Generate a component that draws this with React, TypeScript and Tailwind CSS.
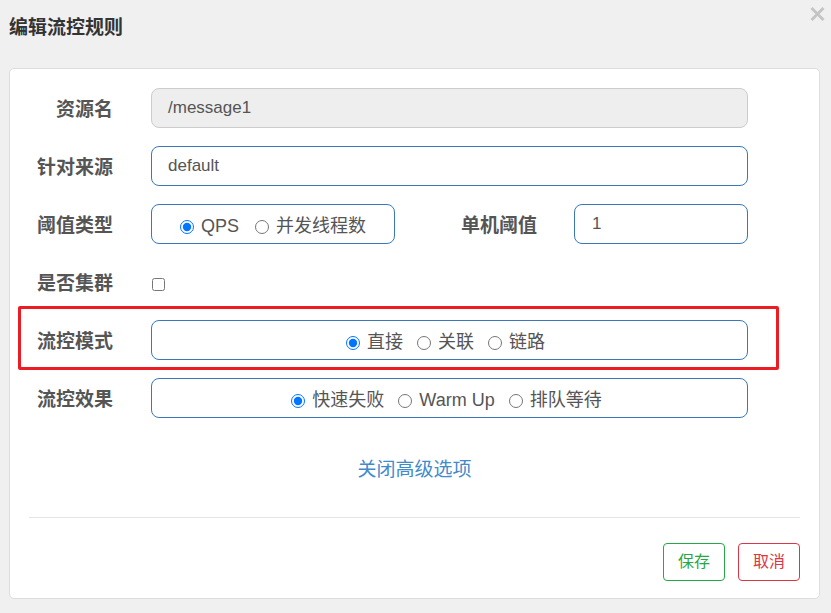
const font = "font-['Liberation_Sans','Noto_Sans_CJK_SC',sans-serif]";

function Radio({ label, checked }: { label: string; checked?: boolean }) {
  return (
    <label className="flex items-center">
      <input
        type="radio"
        defaultChecked={checked}
        className="m-0 h-[14px] w-[14px] accent-[#0075ff]"
      />
      <span className="ml-[7px]">{label}</span>
    </label>
  );
}

function Row({ label, children, last }: { label: string; children: React.ReactNode; last?: boolean }) {
  return (
    <div className={`flex h-[40px] items-center ${last ? "" : "mb-[18px]"}`}>
      <div className="w-[103px] pt-[5px] text-right text-[19px] font-bold text-[#555]">{label}</div>
      <div className="ml-[38px] flex h-full items-center">{children}</div>
    </div>
  );
}

export default function App() {
  return (
    <div className={`h-[613px] w-[831px] overflow-hidden bg-[#f0f0f0] ${font}`}>
      <div className="relative">
        <h1 className="pl-[9px] pt-[16px] text-[19px] font-bold leading-[24px] text-[#333]">编辑流控规则</h1>
        <svg className="absolute left-[810px] top-[7px]" width="15" height="14" viewBox="0 0 15 14">
          <path d="M1.5 1L13.5 13M13.5 1L1.5 13" stroke="#c4c4c4" strokeWidth="2.8" />
        </svg>
      </div>

      <div className="ml-[9px] mt-[28px] w-[811px] rounded-[5px] border border-[#ddd] bg-white pb-[17px] pt-[19px]">
        <Row label="资源名">
          <div className="flex h-[40px] w-[597px] items-center rounded-[8px] border border-[#ccc] bg-[#eee] pl-[16px] text-[17px] text-[#555]">
            /message1
          </div>
        </Row>
        <Row label="针对来源">
          <div className="flex h-[40px] w-[597px] items-center rounded-[8px] border border-[#3a78b8] pl-[16px] text-[17px] text-[#555]">
            default
          </div>
        </Row>
        <Row label="阈值类型">
          <div className="flex h-[40px] w-[244px] items-center justify-center gap-[16px] rounded-[8px] border border-[#3a78b8] pt-[5px] text-[18px] text-[#555]">
            <Radio label="QPS" checked />
            <Radio label="并发线程数" />
          </div>
          <div className="w-[142px] pt-[5px] text-right text-[19px] font-bold text-[#555]">单机阈值</div>
          <div className="ml-[37px] flex h-[40px] w-[174px] items-center rounded-[8px] border border-[#3a78b8] pl-[17px] text-[17px] text-[#555]">
            1
          </div>
        </Row>
        <Row label="是否集群">
          <input type="checkbox" className="m-0 ml-[1px] mt-[5px] h-[13px] w-[13px]" />
        </Row>
        <div className="relative">
          <Row label="流控模式">
            <div className="flex h-[40px] w-[597px] items-center justify-center gap-[14px] rounded-[8px] border border-[#3a78b8] pr-[8px] pt-[5px] text-[18px] text-[#555]">
              <Radio label="直接" checked />
              <Radio label="关联" />
              <Radio label="链路" />
            </div>
          </Row>
          <div className="pointer-events-none absolute left-[8px] top-[-14px] h-[64px] w-[761px] rounded-[2px] border-[3px] border-[#ec1c24]" />
        </div>
        <Row label="流控效果" last>
          <div className="flex h-[40px] w-[597px] items-center justify-center gap-[14px] rounded-[8px] border border-[#3a78b8] pr-[6px] pt-[5px] text-[18px] text-[#555]">
            <Radio label="快速失败" checked />
            <Radio label="Warm Up" />
            <Radio label="排队等待" />
          </div>
        </Row>

        <div className="mt-[40px] text-center text-[19px] leading-[24px] text-[#428bca]">关闭高级选项</div>

        <div className="mx-[19px] mt-[35px] border-t border-[#e5e5e5]" />

        <div className="mr-[19px] mt-[25px] flex justify-end gap-[13px]">
          <button className="h-[38px] w-[62px] rounded-[4px] border border-[#28a745] text-[16px] text-[#28a745]">保存</button>
          <button className="h-[38px] w-[62px] rounded-[4px] border border-[#dc3545] text-[16px] text-[#dc3545]">取消</button>
        </div>
      </div>
    </div>
  );
}
